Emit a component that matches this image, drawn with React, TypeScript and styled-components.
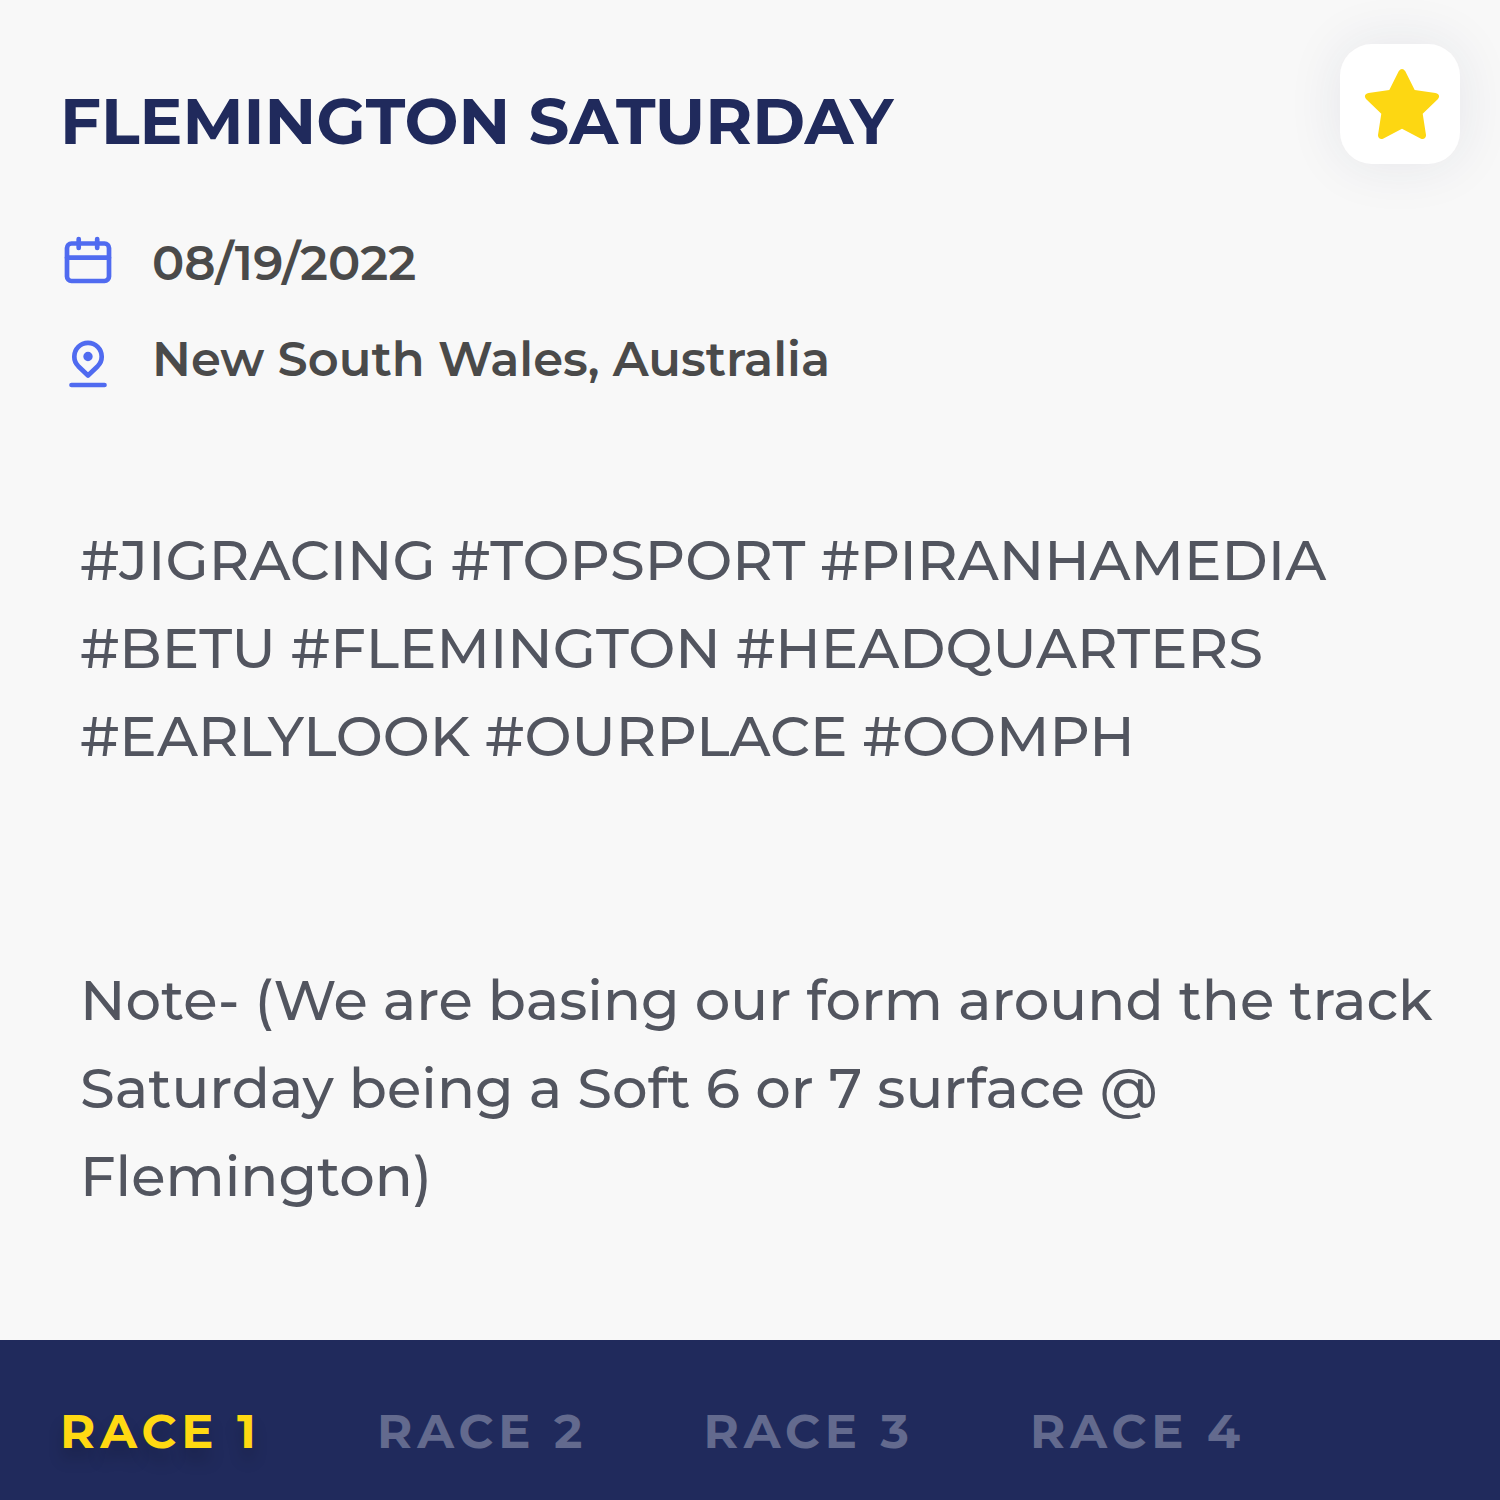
import React, { useState } from "react";
import styled, { createGlobalStyle } from "styled-components";

const Global = createGlobalStyle`
  * { box-sizing: border-box; }
  body { margin: 0; background: #f8f8f8; font-family: Montserrat, Inter, "Open Sans", sans-serif; }
  h1, p { margin: 0; }
`;

const Page = styled.main`
  display: flex;
  flex-direction: column;
  min-height: 100vh;
`;

const Header = styled.header`
  display: flex;
  justify-content: space-between;
  align-items: flex-start;
  padding: 44px 40px 0 60px;
`;

const Title = styled.h1`
  padding-top: 37px;
  font-size: 64px;
  line-height: 80px;
  font-weight: 700;
  color: #202a5c;
`;

const FavouriteButton = styled.button`
  display: grid;
  place-items: center;
  flex-shrink: 0;
  width: 120px;
  height: 120px;
  padding: 0;
  border: 0;
  border-radius: 32px;
  background: #ffffff;
  box-shadow: 0 0 56px rgba(32, 42, 92, 0.09);
  cursor: pointer;
`;

const Details = styled.div`
  display: flex;
  flex-direction: column;
  gap: 36px;
  padding: 69px 64px 0;
`;

const Detail = styled.div`
  display: flex;
  gap: 40px;
  font-size: 48px;
  line-height: 60px;
  font-weight: 600;
  color: #4a4a4a;
`;

const Icon = styled.svg`
  flex-shrink: 0;
  width: 48px;
  height: 60px;
  fill: none;
  stroke: #506bf0;
  stroke-width: 4.7;
  stroke-linecap: round;
  stroke-linejoin: round;
`;

const Notes = styled.section`
  display: flex;
  flex-direction: column;
  gap: 176px;
  padding: 127px 60px 120px 80px;
`;

const Note = styled.p`
  font-size: 56px;
  line-height: 88px;
  font-weight: 500;
  color: #52555f;
`;

const Tabs = styled.nav`
  display: flex;
  gap: 116px;
  align-items: center;
  height: 160px;
  margin-top: auto;
  padding: 22px 60px 0;
  background: #202a5c;
`;

const Tab = styled.button<{ $active: boolean }>`
  padding: 0;
  border: 0;
  background: none;
  font: inherit;
  font-size: 48px;
  line-height: 60px;
  font-weight: 700;
  letter-spacing: 5px;
  white-space: nowrap;
  color: ${(p) => (p.$active ? "#ffd912" : "#636a8e")};
  text-shadow: ${(p) => (p.$active ? "0 12px 16px rgba(0, 0, 0, 0.2)" : "none")};
  cursor: pointer;
`;

const races = ["RACE 1", "RACE 2", "RACE 3", "RACE 4"];

export default function App() {
  const [active, setActive] = useState(0);
  return (
    <Page>
      <Global />
      <Header>
        <Title>FLEMINGTON SATURDAY</Title>
        <FavouriteButton aria-label="Favourite">
          <svg width="80" height="80" viewBox="-2 -2 80 80" fill="#fdd712" aria-hidden="true">
            <path d="M36.7 5.2Q40 .8 43.3 5.2L52.7 24 73.4 26.9C77 27.3 78.2 30.4 76 33L60.7 47.7 64 69C64.2 72 61.6 73.8 59 72.7L40 62.7 21 72.7C18.4 73.8 15.8 72 16 69L19.3 47.7 4 33C1.8 30.4 3 27.3 6.6 26.9L27.3 24Z" />
          </svg>
        </FavouriteButton>
      </Header>
      <Details>
        <Detail>
          <Icon viewBox="0 0 48 60" aria-hidden="true">
            <rect x="3" y="10.5" width="42" height="37.5" rx="4.5" />
            <path d="M3 24.7H45M14.7 6V15M33.2 6V15" />
          </Icon>
          <span>08/19/2022</span>
        </Detail>
        <Detail>
          <Icon viewBox="0 0 48 60" aria-hidden="true">
            <path d="M24 46.5 14.3 37.2A13.7 13.7 0 1 1 33.7 37.2Z" />
            <path d="M7.5 56H40.5" />
            <circle cx="24" cy="27.5" r="2.35" />
          </Icon>
          <span>New South Wales, Australia</span>
        </Detail>
      </Details>
      <Notes>
        <Note>
          #JIGRACING #TOPSPORT #PIRANHAMEDIA #BETU #FLEMINGTON #HEADQUARTERS
          #EARLYLOOK #OURPLACE #OOMPH
        </Note>
        <Note>
          Note- (We are basing our form around the track Saturday being a Soft 6
          or 7 surface @ Flemington)
        </Note>
      </Notes>
      <Tabs>
        {races.map((race, i) => (
          <Tab key={race} $active={i === active} onClick={() => setActive(i)}>{race}</Tab>
        ))}
      </Tabs>
    </Page>
  );
}
